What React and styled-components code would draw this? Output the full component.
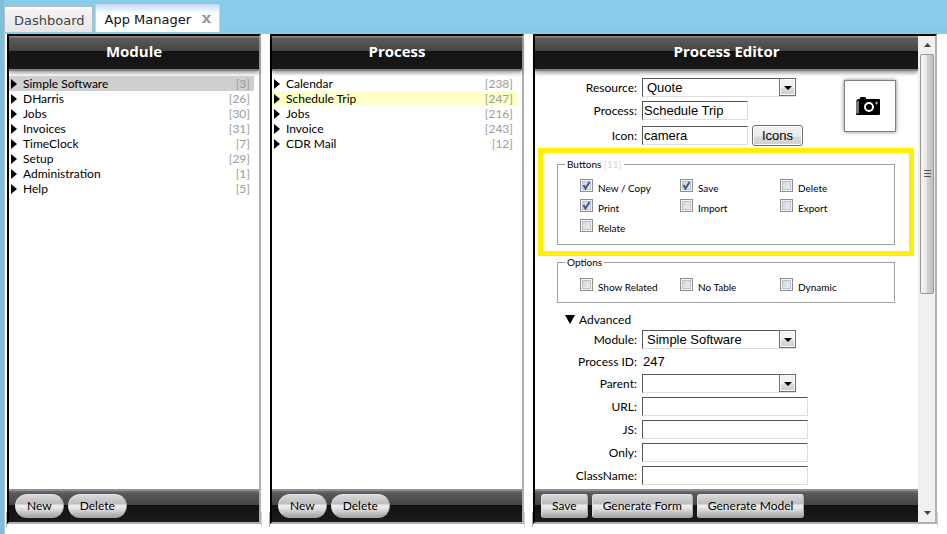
import React, { useState } from "react";
import styled, { createGlobalStyle, css } from "styled-components";

const GlobalStyle = createGlobalStyle`
  *, *::before, *::after { box-sizing: border-box; }
  body {
    margin: 0;
    background: #fff;
    color: #000;
    font: 12px/15px Lato, "Liberation Sans", sans-serif;
  }
  button, input, select { font: inherit; color: inherit; margin: 0; }
`;

const Page = styled.div`
  display: flex;
  flex-direction: column;
  min-height: 100vh;
  border-left: 4px solid #7fbfdc;
`;

const TabBar = styled.nav`
  display: flex;
  align-items: flex-end;
  gap: 2px;
  height: 34px;
  padding: 0 0 2px;
  background: linear-gradient(#87cdea 31px, #a9b9c8 31px, #a9b9c8 32px, #87cdea 32px);
`;

const Tab = styled.div`
  display: flex;
  align-items: center;
  gap: 11px;
  height: ${(p) => (p.$active ? 28 : 26)}px;
  padding: 0 ${(p) => (p.$active ? 8 : 7)}px 0 9px;
  border: 1px solid ${(p) => (p.$active ? "#c5d3e3" : "#b4bcc4")};
  border-bottom: 0;
  border-radius: 2px 2px 0 0;
  background: ${(p) =>
    p.$active
      ? "linear-gradient(#c9dff8, #fff 9px)"
      : "linear-gradient(#fff 1px, #f3f3f3 3px, #e6e6e6)"};
`;

const TabLabel = styled.button`
  padding: 2px 0 0;
  border: 0;
  background: none;
  font: 13px/18px "DejaVu Sans", sans-serif;
  color: ${(p) => (p.$active ? "#111" : "#444")};
`;

const TabClose = styled.button`
  display: flex;
  padding: 0;
  border: 0;
  background: none;
`;

const Panels = styled.main`
  flex: 1;
  display: grid;
  grid-template-columns: 254fr 254fr 404fr;
  gap: 9px;
  padding: 0 10px 10px 2px;
  border-left: 1px solid #b8c4cc;
`;

const Panel = styled.section`
  position: relative;
  display: flex;
  min-width: 0;
  border: 2px solid;
  border-color: #000 #b0b0b0 #b0b0b0 #000;

  &::after {
    content: "";
    position: absolute;
    inset: auto -3px -5px -3px;
    height: 15px;
    border: 1px solid #aaa;
    border-width: 0 1px;
    border-right-color: #d4d4d4;
    pointer-events: none;
  }
`;

const PanelColumn = styled.div`
  flex: 1;
  display: flex;
  flex-direction: column;
  min-width: 0;
`;

const PanelHeader = styled.h2`
  margin: 0;
  height: 35px;
  border-bottom: 2px solid #808080;
  background: linear-gradient(#8a8a8a 1px, #5c5c5c 2px, #444 15px, #131313 15px, #181818);
  box-shadow: 0 2px 4px rgba(0, 0, 0, 0.4);
  color: #fff;
  font: bold 15px/31px "Open Sans", "Noto Sans", sans-serif;
  text-align: center;
`;

const PanelFooter = styled.footer`
  display: flex;
  align-items: flex-start;
  gap: 4px;
  height: 33px;
  padding: 3px 6px 0;
  border-top: 2px solid #909090;
  background: linear-gradient(#6a6a6a 1px, #5a5a5a 2px, #444 14px, #121212 14px, #1a1a1a);
`;

const FooterButton = styled.button`
  height: 24px;
  padding: 0 ${(p) => (p.$pill ? 11 : 10)}px;
  border: 1px solid #aaa;
  border-top-color: #e4e0f0;
  border-left-color: #ddd;
  border-radius: ${(p) => (p.$pill ? 12 : 3)}px;
  background: linear-gradient(#d8d8d8, #bdbdbd 9px, #eee 10px, #e6e6e6 13px, #a4a4a4);
  line-height: 20px;
  white-space: nowrap;
`;

const List = styled.ul`
  flex: 1;
  margin: 0;
  padding: 5px 5px 0 0;
  list-style: none;
`;

const ListRow = styled.li`
  background: ${(p) => p.$highlight || "transparent"};
`;

const RowButton = styled.button`
  display: flex;
  align-items: center;
  width: 100%;
  height: 15px;
  padding: 0 4px 0 2px;
  border: 0;
  background: none;
  text-align: left;
`;

const RowName = styled.span`
  flex: 1;
  padding-left: 6px;
`;

const RowCount = styled.span`
  color: #9c9c9c;
`;

const EditorBody = styled.form`
  flex: 1;
  padding: 7px 0 3px;
`;

const EditorTop = styled.div`
  display: flex;
  align-items: flex-start;
  justify-content: space-between;
`;

const Fields = styled.div`
  display: grid;
  grid-template-columns: 102px auto;
  gap: 4px 5px;
  align-items: center;
  justify-content: start;
`;

const FieldLabel = styled.label`
  text-align: right;
  white-space: nowrap;
`;

const FieldValue = styled.output`
  height: 17px;
  padding-left: 1px;
  font: 13px/17px "Liberation Sans", sans-serif;
`;

const fieldBox = css`
  height: 19px;
  border: 1px solid;
  border-color: #555 #ddd #ddd #555;
  border-radius: 0;
  background: #fff;
  font: 13px/15px "Liberation Sans", sans-serif;
`;

const TextInput = styled.input`
  ${fieldBox}
  width: ${(p) => (p.$wide ? 166 : 106)}px;
  padding: 0 1px;
`;

const SelectWrap = styled.div`
  display: grid;
  width: 154px;
`;

const SelectInput = styled.select`
  ${fieldBox}
  grid-area: 1 / 1;
  appearance: none;
  width: 100%;
  padding: 0 20px 0 4px;
`;

const SelectArrow = styled.span`
  grid-area: 1 / 1;
  justify-self: end;
  display: flex;
  align-items: center;
  justify-content: center;
  width: 17px;
  height: 18px;
  padding-top: 2px;
  border: 1px solid #707070;
  box-shadow: inset 0 0 0 1px #fafafa;
  background: linear-gradient(#f2f2f2 8px, #dcdcdc 9px, #cfcfcf);
  pointer-events: none;
`;

const IconRow = styled.div`
  display: flex;
  align-items: center;
  gap: 4px;
  height: 23px;
`;

const SmallButton = styled.button`
  width: 51px;
  height: 21px;
  padding: 0;
  border: 1px solid #707070;
  border-radius: 3px;
  box-shadow: inset 0 0 0 1px #fafafa;
  background: linear-gradient(#f2f2f2, #ebebeb 10px, #dadada 11px, #cfcfcf);
  font: 13px/17px "Liberation Sans", sans-serif;
`;

const IconPreview = styled.div`
  display: flex;
  align-items: center;
  justify-content: center;
  width: 52px;
  height: 52px;
  margin: 2px 22px 0 0;
  border: 1px solid #808080;
  box-shadow: 0 0 4px rgba(0, 0, 0, 0.5);
`;

const Highlight = styled.div`
  margin: 1px 4px 0 3px;
  padding: 5px 14px 6px;
  border: 5px solid #ffef00;
`;

const OptionGroup = styled.fieldset`
  margin: 0 ${(p) => (p.$inset ? 23 : 0)}px 0 ${(p) => (p.$inset ? 22 : 0)}px;
  padding: ${(p) => (p.$inset ? "9px 0 4px 22px" : "8px 0 5px 22px")};
  border: 1px solid #a0a0a0;
  min-width: 0;
  font-size: 10px;
  line-height: 13px;
`;

const GroupLegend = styled.legend`
  margin-left: -15px;
  padding: 0 2px;
`;

const LegendCount = styled.span`
  color: #d8d8d8;
`;

const OptionGrid = styled.div`
  display: grid;
  grid-template-columns: repeat(3, 100px);
  grid-auto-rows: 20px;
`;

const Option = styled.label`
  display: flex;
  align-items: flex-start;
  gap: 5px;
`;

const OptionText = styled.span`
  padding-top: 3px;
`;

const CheckWrap = styled.span`
  display: grid;
  width: 13px;
  height: 13px;

  & > * { grid-area: 1 / 1; }
  & > svg { visibility: hidden; pointer-events: none; }
  & > input:checked + svg { visibility: visible; }
`;

const CheckInput = styled.input`
  appearance: none;
  width: 13px;
  height: 13px;
  border: 1px solid #8e8f8f;
  box-shadow: inset 0 0 0 1px #f4f4f4, inset 0 0 0 2px #bcc2c8;
  background: linear-gradient(135deg, #cbcfd5, #f6f6f6);
`;

const Advanced = styled.details`
  padding-top: 7px;
`;

const AdvancedSummary = styled.summary`
  display: flex;
  align-items: center;
  gap: 4px;
  height: 19px;
  margin-bottom: 1px;
  padding-left: 30px;
`;

const ScrollTrack = styled.div`
  display: flex;
  flex-direction: column;
  align-items: center;
  width: 17px;
  padding: 7px 1px 7px 2px;
  background: #f0f0f0;
`;

const ScrollThumb = styled.div`
  flex: 239;
  display: flex;
  align-items: center;
  justify-content: center;
  width: 100%;
  margin-top: 7px;
  border: 1px solid #979797;
  border-radius: 2px;
  background: linear-gradient(90deg, #f5f5f5, #e9e9eb 45%, #d2d2d4 50%, #c0c0c4);
`;

const ScrollRest = styled.div`
  flex: 217;
`;

const Triangle = ({ points, width, height, fill = "#000" }) => (
  <svg width={width} height={height} viewBox={`0 0 ${width} ${height}`} aria-hidden="true">
    <polygon points={points} fill={fill} />
  </svg>
);

const CameraIcon = () => (
  <svg width="28" height="20" viewBox="1 0 28 20" aria-hidden="true">
    <path d="M5 3V2q0-1 1-1h4q1 0 1 1v1h13q1 0 1 1v14q0 1-1 1H2q-1 0-1-1V5l2-2z" fill="#000" />
    <path d="M1 5.500l3-1v13H1z" fill="#777" />
    <circle cx="14" cy="11" r="4" fill="none" stroke="#fff" strokeWidth="2" />
    <path d="M21.500 5.500v3M20 7h3" stroke="#aaa" strokeWidth="1" />
  </svg>
);

const modules = [
  ["Simple Software", 3],
  ["DHarris", 26],
  ["Jobs", 30],
  ["Invoices", 31],
  ["TimeClock", 7],
  ["Setup", 29],
  ["Administration", 1],
  ["Help", 5],
];

const processes = [
  ["Calendar", 238],
  ["Schedule Trip", 247],
  ["Jobs", 216],
  ["Invoice", 243],
  ["CDR Mail", 12],
];

const buttonOptions = [
  ["New / Copy", true],
  ["Save", true],
  ["Delete", false],
  ["Print", true],
  ["Import", false],
  ["Export", false],
  ["Relate", false],
];

const displayOptions = [
  ["Show Related", false],
  ["No Table", false],
  ["Dynamic", false],
];

function ListPanel({ title, items, initial, color }) {
  const [selected, setSelected] = useState(initial);
  return (
    <Panel>
      <PanelColumn>
        <PanelHeader>{title}</PanelHeader>
        <List>
          {items.map(([name, count]) => (
            <ListRow key={name} $highlight={name === selected && color}>
              <RowButton type="button" onClick={() => setSelected(name)}>
                <Triangle width={6} height={11} points="0,1 6,6 0,11" />
                <RowName>{name}</RowName>
                <RowCount>[{count}]</RowCount>
              </RowButton>
            </ListRow>
          ))}
        </List>
        <PanelFooter>
          <FooterButton type="button" $pill>New</FooterButton>
          <FooterButton type="button" $pill>Delete</FooterButton>
        </PanelFooter>
      </PanelColumn>
    </Panel>
  );
}

function SelectField({ id, label, value }) {
  return (
    <>
      <FieldLabel htmlFor={id}>{label}:</FieldLabel>
      <SelectWrap>
        <SelectInput id={id} defaultValue={value}>
          <option>{value}</option>
        </SelectInput>
        <SelectArrow>
          <Triangle width={8} height={4} points="0,0 8,0 4,4" />
        </SelectArrow>
      </SelectWrap>
    </>
  );
}

function TextField({ id, label, value = "", wide }) {
  return (
    <>
      <FieldLabel htmlFor={id}>{label}:</FieldLabel>
      <TextInput id={id} type="text" defaultValue={value} $wide={wide} />
    </>
  );
}

function Options({ items }) {
  return (
    <OptionGrid>
      {items.map(([name, checked]) => (
        <Option key={name}>
          <CheckWrap>
            <CheckInput type="checkbox" defaultChecked={checked} />
            <svg width="13" height="13" viewBox="0 0 13 13" aria-hidden="true">
              <path d="M3.500 6l2 3.500L9.500 3" fill="none" stroke="#3b57a0" strokeWidth="2" />
            </svg>
          </CheckWrap>
          <OptionText>{name}</OptionText>
        </Option>
      ))}
    </OptionGrid>
  );
}

function ProcessEditor() {
  return (
    <Panel>
      <PanelColumn>
        <PanelHeader>Process Editor</PanelHeader>
        <EditorBody>
          <EditorTop>
            <Fields>
              <SelectField id="resource" label="Resource" value="Quote" />
              <TextField id="process" label="Process" value="Schedule Trip" />
              <FieldLabel htmlFor="icon">Icon:</FieldLabel>
              <IconRow>
                <TextInput id="icon" type="text" defaultValue="camera" />
                <SmallButton type="button">Icons</SmallButton>
              </IconRow>
            </Fields>
            <IconPreview>
              <CameraIcon />
            </IconPreview>
          </EditorTop>
          <Highlight>
            <OptionGroup>
              <GroupLegend>
                Buttons <LegendCount>[11]</LegendCount>
              </GroupLegend>
              <Options items={buttonOptions} />
            </OptionGroup>
          </Highlight>
          <OptionGroup $inset>
            <GroupLegend>Options</GroupLegend>
            <Options items={displayOptions} />
          </OptionGroup>
          <Advanced open>
            <AdvancedSummary>
              <Triangle width={10} height={9} points="0,0 10,0 5,9" />
              Advanced
            </AdvancedSummary>
            <Fields>
              <SelectField id="module" label="Module" value="Simple Software" />
              <FieldLabel htmlFor="process-id">Process ID:</FieldLabel>
              <FieldValue id="process-id">247</FieldValue>
              <SelectField id="parent" label="Parent" value="" />
              <TextField id="url" label="URL" wide />
              <TextField id="js" label="JS" wide />
              <TextField id="only" label="Only" wide />
              <TextField id="classname" label="ClassName" wide />
            </Fields>
          </Advanced>
        </EditorBody>
        <PanelFooter>
          <FooterButton type="button">Save</FooterButton>
          <FooterButton type="button">Generate Form</FooterButton>
          <FooterButton type="button">Generate Model</FooterButton>
        </PanelFooter>
      </PanelColumn>
      <ScrollTrack aria-hidden="true">
        <Triangle width={7} height={4} points="0,4 3.5,0 7,4" fill="#444" />
        <ScrollThumb>
          <svg width="7" height="8" viewBox="0 0 7 8">
            <path d="M0 .5h7M0 3.500h7M0 6.500h7" stroke="#555" />
          </svg>
        </ScrollThumb>
        <ScrollRest />
        <Triangle width={7} height={4} points="0,0 7,0 3.5,4" fill="#444" />
      </ScrollTrack>
    </Panel>
  );
}

export default function App() {
  return (
    <>
      <GlobalStyle />
      <Page>
        <TabBar>
          <Tab>
            <TabLabel type="button">Dashboard</TabLabel>
          </Tab>
          <Tab $active>
            <TabLabel type="button" $active>App Manager</TabLabel>
            <TabClose type="button" aria-label="Close App Manager">
              <svg width="9" height="8" viewBox="0 0 9 8" aria-hidden="true">
                <path d="M1.500 .5l6 7M7.500 .5l-6 7" stroke="#8e9aa6" strokeWidth="2" />
                <path d="M0 .5h3.500M5.500 .5H9M0 7.500h3.500M5.500 7.500H9" stroke="#8e9aa6" />
              </svg>
            </TabClose>
          </Tab>
        </TabBar>
        <Panels>
          <ListPanel title="Module" items={modules} initial="Simple Software" color="#cfcfcf" />
          <ListPanel title="Process" items={processes} initial="Schedule Trip" color="#ffffc8" />
          <ProcessEditor />
        </Panels>
      </Page>
    </>
  );
}
